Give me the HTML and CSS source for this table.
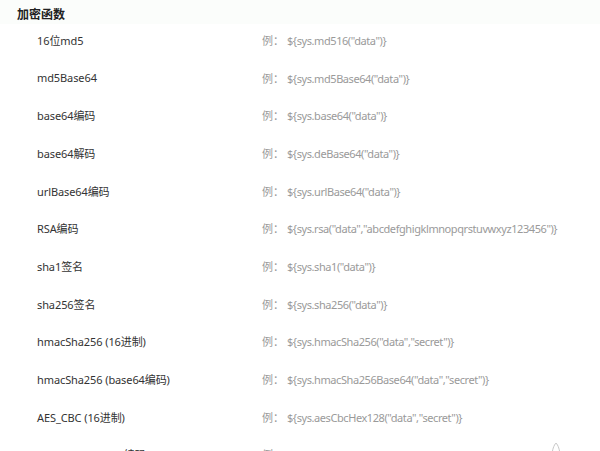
FILE: index.html
```html
<!DOCTYPE html>
<html lang="zh-CN">
<head>
<meta charset="utf-8">
<link rel="stylesheet" href="styles.css">
</head>
<body>
<div class="page">
  <div class="title">加密函数</div>
  <ul class="list">
    <li class="row"><span class="name">16位md5</span><span class="ex"><span class="ex-label">例：</span>${sys.md516("data")}</span></li>
    <li class="row"><span class="name">md5Base64</span><span class="ex"><span class="ex-label">例：</span>${sys.md5Base64("data")}</span></li>
    <li class="row"><span class="name">base64编码</span><span class="ex"><span class="ex-label">例：</span>${sys.base64("data")}</span></li>
    <li class="row"><span class="name">base64解码</span><span class="ex"><span class="ex-label">例：</span>${sys.deBase64("data")}</span></li>
    <li class="row"><span class="name">urlBase64编码</span><span class="ex"><span class="ex-label">例：</span>${sys.urlBase64("data")}</span></li>
    <li class="row"><span class="name">RSA编码</span><span class="ex"><span class="ex-label">例：</span>${sys.rsa("data","abcdefghigklmnopqrstuvwxyz123456")}</span></li>
    <li class="row"><span class="name">sha1签名</span><span class="ex"><span class="ex-label">例：</span>${sys.sha1("data")}</span></li>
    <li class="row"><span class="name">sha256签名</span><span class="ex"><span class="ex-label">例：</span>${sys.sha256("data")}</span></li>
    <li class="row"><span class="name">hmacSha256 (16进制)</span><span class="ex"><span class="ex-label">例：</span>${sys.hmacSha256("data","secret")}</span></li>
    <li class="row"><span class="name">hmacSha256 (base64编码)</span><span class="ex"><span class="ex-label">例：</span>${sys.hmacSha256Base64("data","secret")}</span></li>
    <li class="row"><span class="name">AES_CBC (16进制)</span><span class="ex"><span class="ex-label">例：</span>${sys.aesCbcHex128("data","secret")}</span></li>
    <li class="row"><span class="name">AES_CBC (base64编码)</span><span class="ex"><span class="ex-label">例：</span>${sys.aesCbcBase64128("data","secret")}</span></li>
  </ul>
</div>
<div class="float-icon">
  <svg width="14" height="14" viewBox="0 0 14 14"><path d="M3 14 C3 8 5 3 7 1 C9 3 11 8 11 14" fill="none" stroke="#c8c8c8" stroke-width="1"/></svg>
</div>
</body>
</html>
```
FILE: styles.css
```css
html, body {
  margin: 0;
  padding: 0;
  background: #ffffff;
  overflow: hidden;
}
body {
  width: 600px;
  height: 451px;
  position: relative;
  font-family: "Noto Sans", "Noto Sans CJK SC", sans-serif;
}
.page {
  padding-left: 17px;
  background: linear-gradient(#fbfdfb 0, #fbfdfb 24px, #ffffff 24px);
}
.title {
  padding-top: 7px;
  font-size: 12px;
  line-height: 14px;
  font-weight: bold;
  color: #222;
  font-family: "Noto Sans CJK SC", sans-serif;
}
.list {
  list-style: none;
  margin: 0;
  padding: 0 0 0 20px;
}
.row {
  display: flex;
  align-items: center;
  height: 37.7px;
  font-size: 11px;
}
.name {
  width: 225px;
  flex: none;
  color: #333;
  letter-spacing: -0.1px;
}
.ex {
  color: #9a9a9a;
  letter-spacing: -0.42px;
}
.ex-label {
  margin-right: 3px;
  letter-spacing: 0;
}
.float-icon {
  position: absolute;
  left: 549px;
  top: 439px;
}
```
